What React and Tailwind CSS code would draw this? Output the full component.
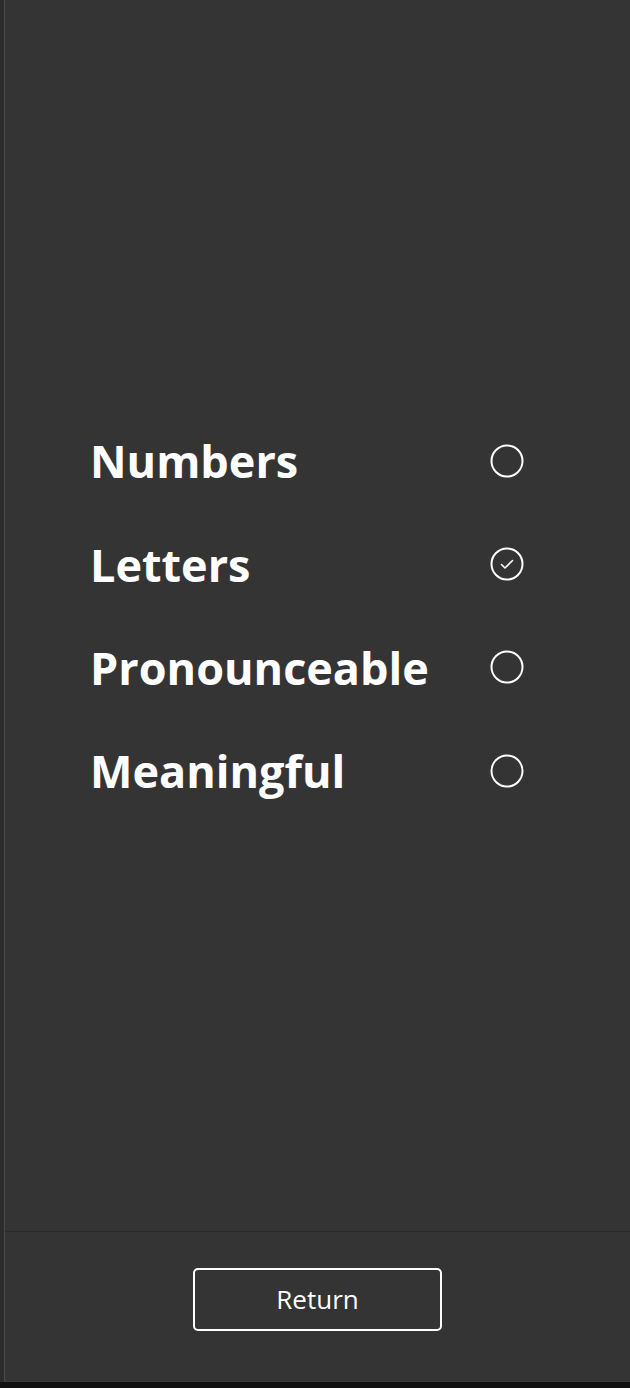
import React from "react";

const options = [
  { label: "Numbers", checked: false },
  { label: "Letters", checked: true },
  { label: "Pronounceable", checked: false },
  { label: "Meaningful", checked: false },
];

function Radio({ checked }) {
  return (
    <svg width="34" height="34" viewBox="0 0 34 34" fill="none">
      <circle cx="17" cy="17" r="15.5" stroke="#ffffff" strokeWidth="2" />
      {checked && (
        <path
          d="M11.5 17.5 L15 21 L22.5 13.5"
          stroke="#ffffff"
          strokeWidth="1.6"
          strokeLinecap="round"
          strokeLinejoin="round"
        />
      )}
    </svg>
  );
}

export default function App() {
  return (
    <div
      className="w-[630px] h-[1388px] flex flex-col bg-[#111111] overflow-hidden"
      style={{ fontFamily: '"Open Sans", "Noto Sans", sans-serif' }}
    >
      <div className="flex flex-1 min-h-0">
        {/* left edge strip */}
        <div className="flex w-[5px] shrink-0">
          <div className="w-[4px] bg-[#2c2c2c]" />
          <div className="w-[1px] bg-[#4a4a4a]" />
        </div>

        <div className="flex flex-1 flex-col bg-[#343434]">
          <main className="h-[1231px] shrink-0 pt-[409px] pl-[85px] pr-[106px]">
            {options.map((opt) => (
              <div
                key={opt.label}
                className="h-[103.4px] flex items-center justify-between"
              >
                <span className="text-white font-bold text-[45px] leading-none">
                  {opt.label}
                </span>
                <Radio checked={opt.checked} />
              </div>
            ))}
          </main>

          <div className="h-[1px] bg-[#2a2a2a]" />

          <footer className="flex flex-1 justify-center pt-[36px] border-b border-[#3c3c3c]">
            <button className="w-[249px] h-[63px] rounded-[5px] border-2 border-white text-white text-[26px] font-medium">
              Return
            </button>
          </footer>
        </div>
      </div>
      <div className="h-[6px] shrink-0 bg-[#111111]" />
    </div>
  );
}
